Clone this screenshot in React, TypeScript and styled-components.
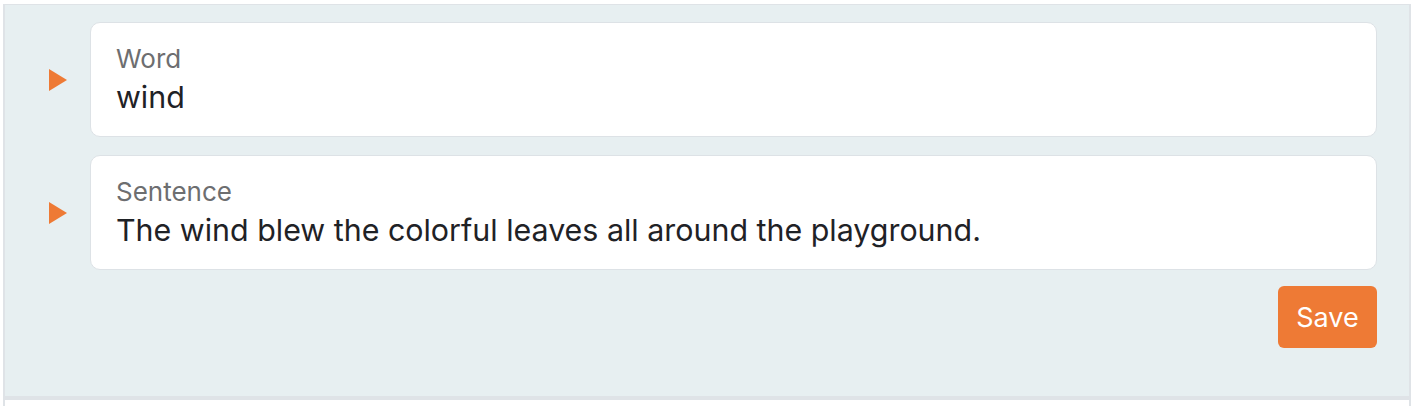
import styled, { createGlobalStyle } from 'styled-components';

const GlobalStyle = createGlobalStyle`
  html, body {
    margin: 0;
    padding: 0;
    background: #ffffff;
  }
  body {
    font-family: Inter, "Liberation Sans", sans-serif;
    -webkit-font-smoothing: antialiased;
  }
`;

const fields = [
  { label: 'Word', value: 'wind' },
  { label: 'Sentence', value: 'The wind blew the colorful leaves all around the playground.' },
];

export default function App(): JSX.Element {
  return (
    <>
      <GlobalStyle />
      <Frame>
        <Editor>
          {fields.map(({ label, value }) => (
            <Row key={label}>
              <Marker />
              <Field>
                <Label>{label}</Label>
                <Value>{value}</Value>
              </Field>
            </Row>
          ))}
          <Actions>
            <SaveButton type='button'>Save</SaveButton>
          </Actions>
        </Editor>
        <NextItem />
      </Frame>
    </>
  );
}

const Frame = styled.div`
  margin: 4px 0 0 3px;
  width: 1408px;
  border-left: 2px solid #dfe3e7;
  border-right: 2px solid #dfe3e7;
  border-top: 1px solid #dfe3e7;
  box-sizing: border-box;
`;

const Editor = styled.div`
  background: #e7eff1;
  padding: 17px 32px 48px 44px;
  display: flex;
  flex-direction: column;
  gap: 18px;
`;

const Row = styled.div`
  display: flex;
  align-items: center;
  gap: 23px;
`;

const Marker = styled.span`
  width: 0;
  height: 0;
  border-top: 11px solid transparent;
  border-bottom: 11px solid transparent;
  border-left: 18px solid #ee7a35;
  flex: none;
`;

const Field = styled.div`
  flex: 1;
  background: #ffffff;
  border: 1px solid #dde2e6;
  border-radius: 10px;
  padding: 21px 25px 19px;
  display: flex;
  flex-direction: column;
`;

const Label = styled.div`
  font-size: 26px;
  line-height: 30px;
  color: #6d6e70;
`;

const Value = styled.div`
  margin-top: 3px;
  font-size: 30.4px;
  line-height: 40px;
  color: #1f2226;
`;

const Actions = styled.div`
  display: flex;
  justify-content: flex-end;
  margin-top: -2px;
`;

const SaveButton = styled.button`
  width: 99px;
  height: 62px;
  border: none;
  border-radius: 6px;
  background: #ee7a35;
  color: #ffffff;
  font-family: Inter, "Liberation Sans", sans-serif;
  font-size: 27px;
  cursor: pointer;
`;

const NextItem = styled.div`
  height: 20px;
  border-top: 4px solid #dfe3e7;
  background: #ffffff;
`;
